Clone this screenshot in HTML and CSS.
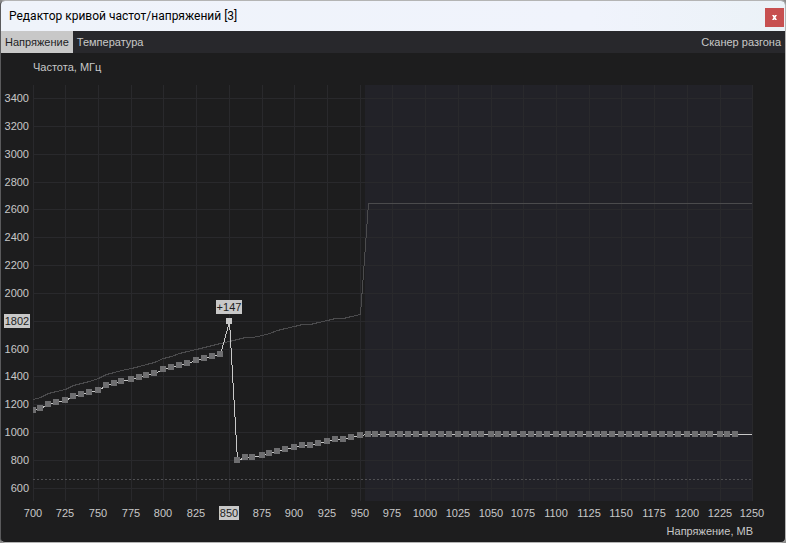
FILE: index.html
```
<!DOCTYPE html>
<html lang="ru">
<head>
    <meta charset="UTF-8">
    <meta name="viewport" content="width=device-width, initial-scale=1.0">
    <title>Редактор кривой частот/напряжений</title>
    <link rel="stylesheet" href="styles.css">
</head>
<body>
    <div class="window">
        <header class="titlebar">
            <h1>Редактор кривой частот/напряжений [3]</h1>
            <button type="button" class="close" aria-label="Закрыть">
                <svg viewBox="0 0 5 5" width="5" height="5" aria-hidden="true">
                    <path d="M0 0H2L2.5 1L3 0H5L3.5 2.5L5 5H3L2.5 4L2 5H0L1.5 2.5Z" />
                </svg>
            </button>
        </header>

        <nav class="menu">
            <button type="button" class="tab active">Напряжение</button>
            <button type="button" class="tab">Температура</button>
            <button type="button" class="tab scanner">Сканер разгона</button>
        </nav>

        <main>
            <svg id="chart" class="chart" viewBox="1 53 784 488" role="img" aria-label="Кривая частот и напряжений"></svg>
        </main>
    </div>

    <script src="chart.js"></script>
</body>
</html>
```

FILE: styles.css
```
body {
    font-family: "Liberation Sans", Arial, sans-serif;
    font-size: 11px;
    margin: 0;
    background-color: #8c8c8c;
}

.window {
    display: flex;
    flex-direction: column;
    min-height: 100vh;
    box-sizing: border-box;
    border: 1px solid #b4b4b4;
    border-left-color: #5a5a5c;
    border-radius: 5px;
    overflow: hidden;
    background-color: #1d1d1e;
}

.titlebar {
    display: flex;
    align-items: center;
    justify-content: space-between;
    height: 30px;
    padding: 0 1px 0 8px;
    background: linear-gradient(to right, #eff3fa, #f0f3fc 75%, #ebf2f7);
}

.titlebar h1 {
    margin: 0;
    font-family: Roboto, "Open Sans", sans-serif;
    font-size: 12px;
    font-weight: normal;
    color: #000000;
}

.close {
    display: flex;
    align-items: center;
    justify-content: center;
    align-self: flex-end;
    width: 19px;
    height: 19px;
    margin-bottom: 4px;
    padding: 0;
    border: none;
    background-color: #c75050;
    cursor: pointer;
}

.close path {
    fill: #ffffff;
}

.menu {
    display: flex;
    height: 22px;
    background-color: #28282c;
}

.tab {
    padding: 0 4px;
    border: none;
    background: none;
    font: inherit;
    color: #c8c8c8;
    cursor: pointer;
}

.tab.active {
    background-color: #c8c8c8;
    color: #1d1d1e;
}

.scanner {
    margin-left: auto;
}

.chart {
    display: block;
    width: 100%;
}

.chart text {
    font-size: 11px;
    fill: #c8c8c8;
}

.chart .middle {
    text-anchor: middle;
}

.chart .end {
    text-anchor: end;
}

.chart .badge {
    fill: #c8c8c8;
}

.chart .badge-text {
    fill: #1d1d1e;
}

.shade {
    fill: #222228;
}

.grid {
    stroke: #29292c;
}

.limit {
    stroke: #505053;
    stroke-dasharray: 2 2;
}

.default-curve {
    fill: none;
    stroke: #4b4b4d;
}

.curve {
    fill: none;
    stroke: #c8c8c8;
}

.marker {
    fill: #6e6e70;
}

.marker.selected {
    fill: #c8c8c8;
}

.grid, .limit, .curve, .default-curve, .marker, .badge, .shade {
    shape-rendering: crispEdges;
}
```

FILE: chart.js
```
const chart = document.getElementById('chart');

const LEFT = 33;
const RIGHT = 752;
const TOP = 85;
const BOTTOM = 501;
const SELECTED = 24; // 850 mV

// vertical position of each point, one per 6.25 mV
const curve = [
    410, 408, 404, 402, 400, 396, 394, 392, 390, 385, 383, 381,
    379, 377, 375, 373, 369, 367, 365, 363, 360, 358, 356, 354,
    321, 460, 457, 457, 455, 453, 451, 449, 447, 445, 445, 443,
    441, 439, 439, 437, 435
];
while (curve.length < 87) curve.push(434);

const defaultCurve = [
    399, 397, 393, 391, 389, 385, 383, 381, 378, 374, 372, 370,
    368, 366, 364, 362, 358, 356, 353, 351, 349, 347, 345, 343,
    341, 339, 337, 337, 335, 333, 330, 328, 326, 324, 324, 322,
    320, 318, 318, 316, 314, 203
];

function xOf(mv) {
    return Math.floor(LEFT + (Math.floor(mv) - 700) * 1.3087);
}

function yOf(mhz) {
    return Math.round(98 + (3400 - mhz) * 0.1392);
}

function add(name, attrs, text) {
    const el = document.createElementNS('http://www.w3.org/2000/svg', name);
    for (const key in attrs) el.setAttribute(key, attrs[key]);
    if (text) el.textContent = text;
    chart.appendChild(el);
}

function line(cls, x1, y1, x2, y2) {
    add('path', { class: cls, d: `M${x1} ${y1}L${x2} ${y2}` });
}

function badge(cx, cy, width, text) {
    add('rect', { class: 'badge', x: cx - width / 2, y: cy - 7, width: width, height: 14 });
    add('text', { class: 'badge-text middle', x: cx, y: cy + 4 }, text);
}

function points(values) {
    return values.map((y, i) => `${xOf(700 + i * 6.25) + 0.5},${y + 0.5}`).join(' ') + ` ${RIGHT},${values[values.length - 1] + 0.5}`;
}

add('rect', { class: 'shade', x: 365, y: TOP, width: RIGHT - 365, height: BOTTOM - TOP });

// grid and axis labels
for (let mhz = 600; mhz <= 3400; mhz += 200) {
    const y = yOf(mhz);
    line('grid', LEFT, y + 0.5, RIGHT, y + 0.5);
    if (mhz === 1800) badge(17, y, 26, '1802');
    else add('text', { class: 'end', x: 29, y: y + 4 }, mhz);
}
for (let mv = 700; mv <= 1250; mv += 25) {
    const x = xOf(mv);
    line('grid', x + 0.5, TOP, x + 0.5, BOTTOM);
    if (mv === 850) badge(x, 513, 20, '850');
    else add('text', { class: 'middle', x: x, y: 517 }, mv);
}

add('text', { x: LEFT, y: 71 }, 'Частота, МГц');
add('text', { class: 'end', x: 753, y: 535 }, 'Напряжение, МВ');

// curves
line('limit', LEFT, 479.5, RIGHT, 479.5);
add('polyline', { class: 'default-curve', points: points(defaultCurve) });
add('polyline', { class: 'curve', points: points(curve) });

curve.forEach((y, i) => {
    const x = xOf(700 + i * 6.25);
    const start = Math.max(x - 3, LEFT);
    add('rect', {
        class: i === SELECTED ? 'marker selected' : 'marker',
        x: start, y: y - 3, width: x + 3 - start, height: 6
    });
});

badge(229, 307, 26, '+147');
```
